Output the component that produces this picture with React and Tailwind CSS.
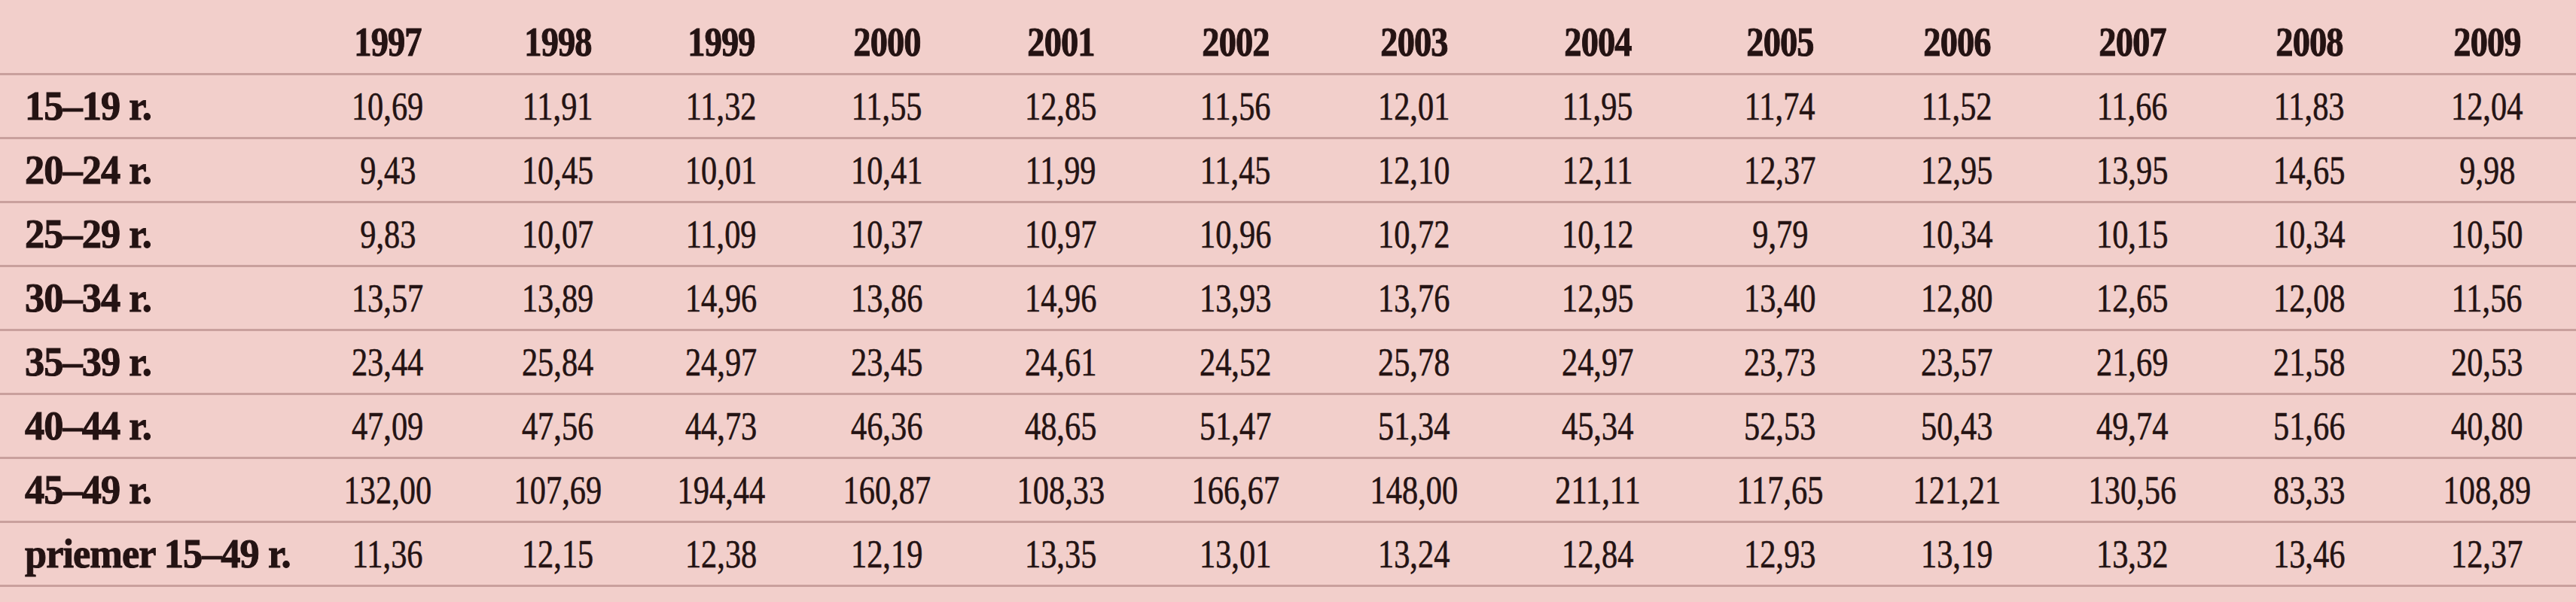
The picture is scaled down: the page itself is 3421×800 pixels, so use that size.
const years = ["1997","1998","1999","2000","2001","2002","2003","2004","2005","2006","2007","2008","2009"];

const rows = [
  ["15–19 r.", ["10,69","11,91","11,32","11,55","12,85","11,56","12,01","11,95","11,74","11,52","11,66","11,83","12,04"]],
  ["20–24 r.", ["9,43","10,45","10,01","10,41","11,99","11,45","12,10","12,11","12,37","12,95","13,95","14,65","9,98"]],
  ["25–29 r.", ["9,83","10,07","11,09","10,37","10,97","10,96","10,72","10,12","9,79","10,34","10,15","10,34","10,50"]],
  ["30–34 r.", ["13,57","13,89","14,96","13,86","14,96","13,93","13,76","12,95","13,40","12,80","12,65","12,08","11,56"]],
  ["35–39 r.", ["23,44","25,84","24,97","23,45","24,61","24,52","25,78","24,97","23,73","23,57","21,69","21,58","20,53"]],
  ["40–44 r.", ["47,09","47,56","44,73","46,36","48,65","51,47","51,34","45,34","52,53","50,43","49,74","51,66","40,80"]],
  ["45–49 r.", ["132,00","107,69","194,44","160,87","108,33","166,67","148,00","211,11","117,65","121,21","130,56","83,33","108,89"]],
  ["priemer 15–49 r.", ["11,36","12,15","12,38","12,19","13,35","13,01","13,24","12,84","12,93","13,19","13,32","13,46","12,37"]],
];

const gridCols = "grid grid-cols-[400px_230px_221px_213px_228px_234px_230px_243px_246px_238px_232px_234px_236px_236px]";

export default function App() {
  return (
    <div className="w-[3421px] h-[800px] bg-[#f2cfcb] text-[#241313] font-['Liberation_Serif',serif] overflow-hidden">
      <div className={`${gridCols} h-[100px] border-b-[3px] border-[#c9a09d]`}>
        <div />
        {years.map((y) => (
          <div key={y} className="flex items-center justify-center pt-[14px]">
            <span className="inline-block origin-center scale-x-[0.86] text-[54px] leading-none font-bold tracking-[-1px] [-webkit-text-stroke:1px_#241313]">{y}</span>
          </div>
        ))}
      </div>
      {rows.map(([label, vals]) => (
        <div key={label} className={`${gridCols} h-[85px] border-b-[3px] border-[#c9a09d]`}>
          <div className="flex items-center pl-[33px] whitespace-nowrap">
            <span className="inline-block origin-left scale-x-[0.97] text-[54px] font-bold leading-none tracking-[-1px] [-webkit-text-stroke:1px_#241313]">{label}</span>
          </div>
          {vals.map((v, i) => (
            <div key={i} className="flex items-center justify-center whitespace-nowrap">
              <span className="inline-block origin-center scale-x-[0.8] text-[53px] leading-none [-webkit-text-stroke:0.6px_#241313]">{v}</span>
            </div>
          ))}
        </div>
      ))}
    </div>
  );
}
